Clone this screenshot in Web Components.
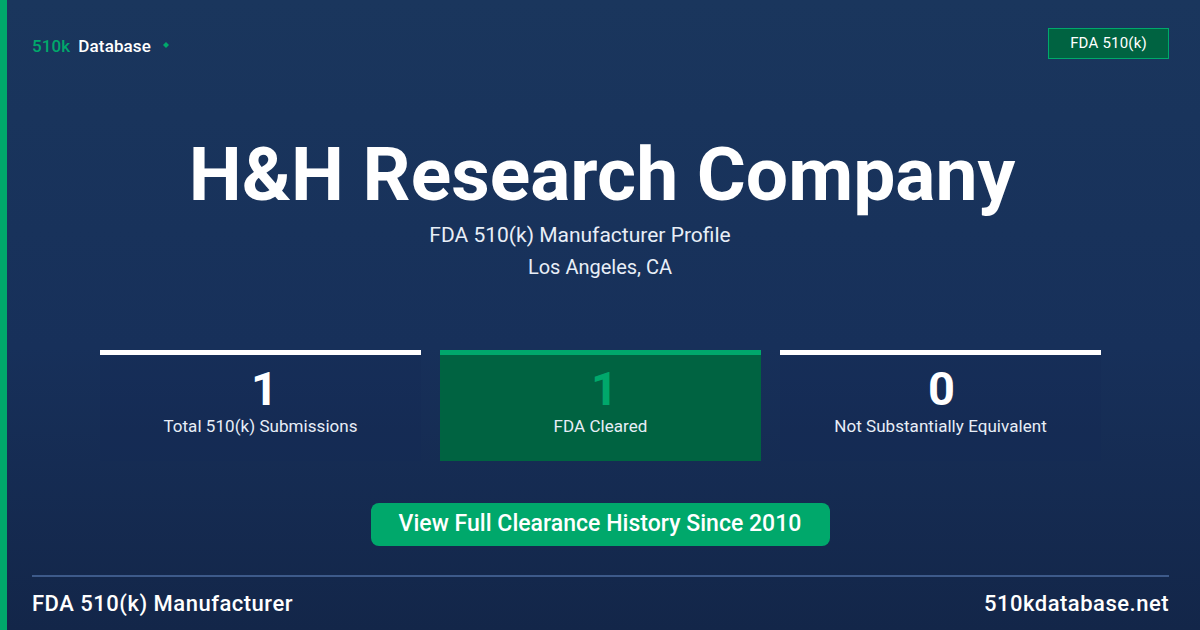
<!DOCTYPE html>
<html><head><meta charset="utf-8"><style>
html,body{margin:0;padding:0;width:1200px;height:630px;overflow:hidden}
body{font-family:Roboto,"Liberation Sans",sans-serif;background:#1a365d}
</style></head><body>
<template id="t-card"><style>
:host{display:flex;width:1200px;height:630px;box-sizing:border-box;background:linear-gradient(180deg,#1a365d 0%,#17305a 55%,#132649 100%);border-left:7px solid #00a86b;color:#fff;flex-direction:column;padding:28px 31px 0 25px}
.top{display:flex;justify-content:space-between;align-items:flex-start;height:31px}
.main{display:flex;flex-direction:column;align-items:center;margin-left:-32px;margin-right:-31px}
</style>
<div class="top"><slot name="brand"></slot><slot name="badge"></slot></div>
<div class="main"><slot></slot></div>
<slot name="footer"></slot></template>

<template id="t-brand"><style>
:host{display:flex;align-items:center;height:36px;font-size:17px;font-weight:500;letter-spacing:.12px;color:#fff}
.k{color:#00a86b;margin-right:8px}
.dot{width:6px;height:6px;margin-left:12px;margin-top:-2px}
</style><span class="k">510k</span><span>Database</span>
<svg class="dot" viewBox="0 0 6 6"><path d="M3 0L6 3 3 6 0 3z" fill="#00a86b"/></svg></template>

<template id="t-badge"><style>
:host{display:flex;align-items:center;justify-content:center;box-sizing:border-box;width:121px;height:31px;background:#006341;border:1px solid #00a86b;font-size:15px;font-weight:400;letter-spacing:.2px;color:#fff;padding-bottom:2px}
</style><slot></slot></template>

<template id="t-head"><style>
:host{display:flex;flex-direction:column;align-items:center;margin-top:73px}
h1{margin:0 0 0 4px;font-size:75px;line-height:84px;font-weight:700;letter-spacing:0}
.s{font-size:21px;line-height:32px;color:#e8eef7}
.a{margin-right:40px;margin-top:3px}
.l{font-size:20px}
</style><h1><slot name="title"></slot></h1><div class="s a"><slot name="sub"></slot></div><div class="s l"><slot name="loc"></slot></div></template>

<template id="t-stats"><style>
:host{display:flex;gap:19px;margin-top:67px;margin-left:1px}
</style><slot></slot></template>

<template id="t-stat"><style>
:host{display:flex;flex-direction:column;align-items:center;box-sizing:border-box;width:321px;height:111px;background:rgba(18,40,85,.25);border-top:5px solid #fff;color:#fff}
:host([green]){background:#006341;border-top-color:#00a86b}
.n{font-size:47px;line-height:52px;font-weight:700;margin-top:8px;padding-left:2px}
:host([one]) .n{padding-left:8px}
:host([green]) .n{color:#00a86b}
.l{font-size:17px;line-height:20px;letter-spacing:.05px;color:#e8eef7;margin-top:1px}
</style><div class="n"><slot name="n"></slot></div><div class="l"><slot name="l"></slot></div></template>

<template id="t-cta"><style>
:host{display:flex;align-items:center;justify-content:center;box-sizing:border-box;width:459px;height:43px;margin-top:42px;padding-bottom:3px;background:#00a86b;border-radius:8px;font-size:23px;font-weight:500;letter-spacing:.03px;color:#fff}
</style><slot></slot></template>

<template id="t-foot"><style>
:host{display:flex;justify-content:space-between;align-items:center;box-sizing:border-box;height:56px;margin-top:29px;border-top:2px solid #3d5a8a;font-size:22px;font-weight:500;letter-spacing:.5px;color:#fff}
</style><slot name="left"></slot><slot name="right"></slot></template>

<og-card>
<og-brand slot="brand"></og-brand>
<og-badge slot="badge">FDA 510(k)</og-badge>
<og-head><span slot="title">H&amp;H Research Company</span><span slot="sub">FDA 510(k) Manufacturer Profile</span><span slot="loc">Los Angeles, CA</span></og-head>
<og-stats>
<og-stat one><span slot="n">1</span><span slot="l">Total 510(k) Submissions</span></og-stat>
<og-stat one green><span slot="n">1</span><span slot="l">FDA Cleared</span></og-stat>
<og-stat><span slot="n">0</span><span slot="l">Not Substantially Equivalent</span></og-stat>
</og-stats>
<og-cta>View Full Clearance History Since 2010</og-cta>
<og-foot slot="footer"><span slot="left">FDA 510(k) Manufacturer</span><span slot="right">510kdatabase.net</span></og-foot>
</og-card>
<script>
for(const n of ['card','brand','badge','head','stats','stat','cta','foot']){
  const t=document.getElementById('t-'+n);
  customElements.define('og-'+n,class extends HTMLElement{constructor(){super();this.attachShadow({mode:'open'}).appendChild(t.content.cloneNode(true))}});
}
</script>
</body></html>
